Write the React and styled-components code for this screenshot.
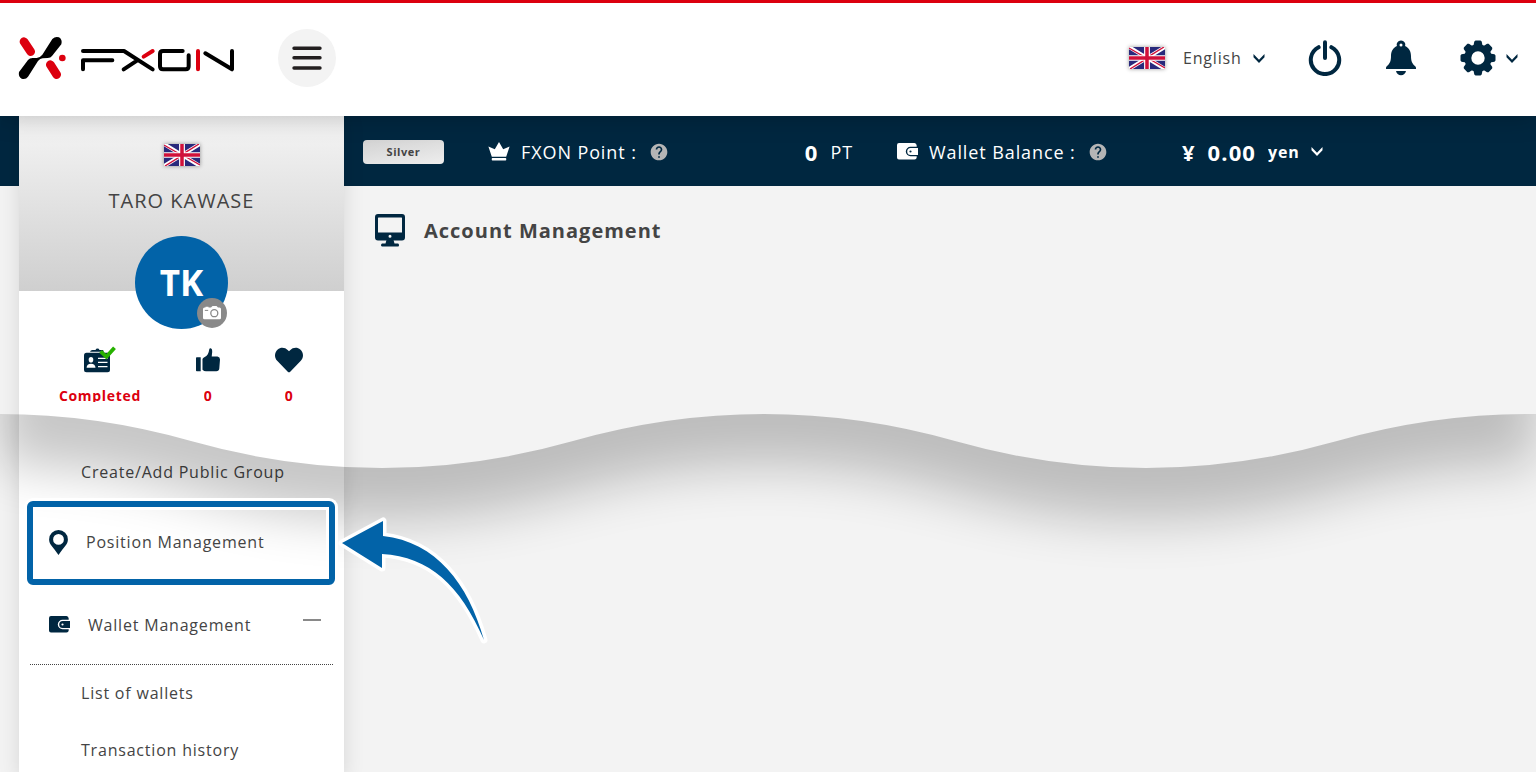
import React from 'react'
import styled, {createGlobalStyle} from 'styled-components';
import {FaHeart} from 'react-icons/fa';
import {MdHelp} from 'react-icons/md';

const subMenu = ["List of wallets", "Transaction history"];

const Logo = () => (
    <svg width="217" height="44" viewBox="54 108 651 132" fill="none" strokeLinecap="round" role="img" aria-label="FXON">
        <path d="M72 125L92 155M151 194L170 224" stroke="#dc000f" strokeWidth="26"/>
        <circle cx="187" cy="174" r="10" fill="#dc000f"/>
        <path
            d="M157 117Q166 108 177 112Q188 119 184 133L156 168Q152 174 143 174L128 175Q120 176 114 183L84 230Q77 240 65 236Q54 230 57 216L84 180Q89 174 98 174L110 174Q120 173 127 164Z"
            fill="#000"
        />
        <g stroke="#000" strokeWidth="12" strokeLinejoin="round">
            <path d="M249 153H372L458 208M249 208V181H337M371 208L412 181"/>
            <path d="M548 153H489Q480 153 480 162V199Q480 208 489 208H557Q566 208 566 199V166"/>
            <path d="M616 160L696 208V153"/>
        </g>
        <path d="M431 170L458 153M594 153V208" stroke="#dc000f" strokeWidth="12"/>
    </svg>
);

const UkFlag = () => (
    <FlagImage viewBox="0 0 37 23" preserveAspectRatio="none" role="img" aria-label="United Kingdom">
        <path d="M0 0H37V23H0Z" fill="#29297c"/>
        <path d="M0 0L37 23M37 0L0 23" stroke="#fff" strokeWidth="4"/>
        <path d="M0 1L17 11M37 22L20 12M1 23L17 13M36 0L20 10" stroke="#d0103a" strokeWidth="1.4"/>
        <path d="M18.5 0V23M0 11.5H37" stroke="#fff" strokeWidth="6"/>
        <path d="M18.5 0V23M0 11.5H37" stroke="#d0103a" strokeWidth="3.6"/>
    </FlagImage>
);

const Chevron = () => (
    <ChevronIcon width="12" height="9" viewBox="0 0 12 9" aria-hidden="true">
        <path d="M.5 0L6 5.7L11.500 0V3.200L6 9L.5 3.200Z"/>
    </ChevronIcon>
);

const MenuIcon = () => (
    <svg width="30" height="24" viewBox="0 0 30 24" fill="none" stroke="#231f20" strokeWidth="3.4" strokeLinecap="round">
        <path d="M2 2.2H28M2 11.7H28M2 22H28"/>
    </svg>
);

const PowerIcon = () => (
    <svg width="34" height="36" viewBox="0 0 34 36" fill="none" stroke="currentColor" strokeWidth="4" strokeLinecap="round">
        <path d="M17 2.300V18"/>
        <path d="M10.600 7.200A14.200 14.200 0 1 0 23.400 7.200"/>
    </svg>
);

const BellIcon = () => (
    <svg width="32" height="36" viewBox="0 0 32 36" fill="currentColor">
        <path
            fillRule="evenodd"
            d="M16 .5a4.200 4.200 0 0 1 4.100 5.600C24 7.800 26 11.500 26 16C26 21 27 23.500 30.200 26.200Q31 27 31 28V29H1V28Q1 27 1.800 26.200C5 23.500 6 21 6 16C6 11.500 8 7.800 11.900 6.100A4.200 4.200 0 0 1 16 .5ZM16 3.500a1.500 1.500 0 1 0 0 3a1.500 1.500 0 1 0 0-3Z"
        />
        <path d="M11 31H21C20.500 33.600 18.600 35.200 16 35.200S11.500 33.600 11 31Z"/>
    </svg>
);

const GearIcon = () => (
    <svg width="36" height="36" viewBox="-18 -18 36 36" fill="currentColor">
        {[0, 45, 90, 135].map(angle => (
            <path
                key={angle}
                transform={`rotate(${angle})`}
                d="M-2.500 -17.500H2.500L3.700 -16.500L4.600 -12H-4.600L-3.700 -16.500ZM-2.500 17.500H2.500L3.700 16.500L4.600 12H-4.600L-3.700 16.500Z"
            />
        ))}
        <circle r="10.200" fill="none" stroke="currentColor" strokeWidth="7"/>
    </svg>
);

const CrownIcon = () => (
    <svg width="22" height="19" viewBox="0 0 22 19" fill="currentColor">
        <path d="M11 0L15.200 7.200L21.600 4.500L18.200 14.800H3.800L.4 4.500L6.800 7.200Z"/>
        <path d="M4.500 16H17.500Q18.300 16 18.300 17.200T17.500 18.400H4.500Q3.700 18.400 3.700 17.200T4.500 16Z"/>
    </svg>
);

const WalletIcon = () => (
    <svg width="21" height="17" viewBox="0 0 21 17" fill="currentColor">
        <path d="M2 0H17.500Q19.500 0 19.700 2.500V3.800H13.500A4.500 4.500 0 0 0 13.500 13.200H19.700V14.500Q19.500 16.500 17.500 16.500H2Q0 16.500 0 14.500V2Q0 0 2 0Z"/>
        <path fillRule="evenodd" d="M13.700 5H21V12H13.700A3.500 3.500 0 0 1 13.700 5ZM13.500 7.400a1.100 1.100 0 1 0 0 2.200a1.100 1.100 0 1 0 0-2.200Z"/>
    </svg>
);

const MonitorIcon = () => (
    <svg width="32" height="33" viewBox="0 0 32 33" fill="#002740">
        <path
            fillRule="evenodd"
            d="M4 0H28Q31 0 31 3V23.500Q31 26.500 28 26.500H4Q1 26.500 1 23.500V3Q1 0 4 0ZM4.500 3.400Q4 3.400 4 4V18.600H28V4Q28 3.400 27.500 3.400ZM16 20.700a1.500 1.500 0 1 0 0 3a1.500 1.500 0 1 0 0-3Z"
        />
        <path d="M12.500 26H19.500L20.500 29.600H24Q25 30 25 31.200T24 32.500H8Q7 32.300 7 31.200T8 29.600H11.500Z"/>
    </svg>
);

const CameraIcon = () => (
    <svg width="18" height="14" viewBox="0 0 18 14" fill="#fff">
        <path d="M1.500 1.500H2.500V.8H5.500V1.500H8L9.500 0H13.500L15 1.500H16.500Q18 1.500 18 3V12Q18 13.200 16.500 13.200H1.500Q0 13.200 0 12V3Q0 1.500 1.500 1.500Z"/>
        <path d="M1.800 4.400H5.200" stroke="#898989" strokeWidth="1"/>
        <circle cx="11.300" cy="7.200" r="3.500" stroke="#898989" strokeWidth="1.300"/>
    </svg>
);

const IdCardIcon = () => (
    <svg width="33" height="28" viewBox="0 0 33 28">
        <path d="M6 5.700Q6.500 4 8.500 4H11.500Q12 2.600 13.500 2.600T15.500 4H19L20 5.700Z" fill="#002740"/>
        <rect y="6.800" width="26" height="19.500" rx="2.500" fill="#002740"/>
        <g fill="#fff">
            <ellipse cx="7" cy="13.800" rx="2.300" ry="2.800"/>
            <path d="M2.600 21.800Q2.800 17.700 7 17.700T11.500 21.800Z"/>
            <path d="M14 11.700H23.500V13H14ZM14 15.700H23.500V17H14ZM14 19.900H23.500V21.300H14Z"/>
        </g>
        <path d="M16.600 5.300L22.400 10.800L30.500 1.700" fill="none" stroke="#27b100" strokeWidth="3.800"/>
    </svg>
);

const ThumbIcon = () => (
    <svg width="24" height="24" viewBox="0 0 24 24" fill="#002740">
        <path d="M.8 9.300H4.700V23.300H.8Q0 23.300 0 22.500V10.100Q0 9.300 .8 9.300Z"/>
        <path d="M6.500 11Q7 9.900 8.300 9.300C11.500 7.800 12.800 5 13.200 1.500Q13.500 0 14.600 .2C16 .5 16.300 2.300 16.200 4L15.700 8.500H21.500Q24 8.800 24 11.500L23.300 20.500Q23 23.300 20.300 23.300H10Q8 23.300 6.500 21.800Z"/>
    </svg>
);

const PinIcon = () => (
    <svg width="19" height="25" viewBox="0 0 19 25" fill="#002740">
        <path fillRule="evenodd" d="M9.500 0A9.400 9.400 0 0 1 18.900 9.400C18.900 14.500 15 16.500 9.500 25C4 16.500 .1 14.500 .1 9.400A9.400 9.400 0 0 1 9.500 0ZM9.500 4a5.400 5.400 0 1 0 0 10.800a5.400 5.400 0 1 0 0-10.800Z"/>
    </svg>
);

const Wave = () => (
    <WaveShadow viewBox="0 0 1536 240" preserveAspectRatio="none" aria-hidden="true">
        <defs>
            <filter id="soften" x="-10%" y="-100%" width="120%" height="300%">
                <feGaussianBlur stdDeviation="26"/>
            </filter>
            <clipPath id="belowWave">
                <path d="M0 0Q96 0 191 27T382 54Q478 54 573 27T764 0Q860 0 955 27T1146 54Q1242 54 1337 27T1528 0H1536V240H0Z"/>
            </clipPath>
        </defs>
        <g clipPath="url(#belowWave)">
            <path
                d="M0 51Q96 51 191 78T382 105Q478 105 573 78T764 51Q860 51 955 78T1146 105Q1242 105 1337 78T1528 51H1536V-90H0Z"
                fill="#000"
                opacity="0.220"
                filter="url(#soften)"
            />
        </g>
    </WaveShadow>
);

const App = () => {

    return (
        <Page>
            <GlobalStyle/>
            <Header>
                <Brand href="#"><Logo/></Brand>
                <MenuToggle type="button" aria-label="Menu"><MenuIcon/></MenuToggle>
                <HeaderTools>
                    <Language>
                        <UkFlag/>
                        <Picker>
                            <Select aria-label="Language">
                                <option>English</option>
                            </Select>
                            <Chevron/>
                        </Picker>
                    </Language>
                    <IconButton type="button" aria-label="Log out"><PowerIcon/></IconButton>
                    <IconButton type="button" aria-label="Notifications"><BellIcon/></IconButton>
                    <IconButton type="button" aria-label="Settings"><GearIcon/><Chevron/></IconButton>
                </HeaderTools>
            </Header>
            <Body>
                <Sidebar>
                    <Profile>
                        <UkFlag/>
                        <UserName>TARO KAWASE</UserName>
                        <Avatar>
                            TK
                            <PhotoButton type="button" aria-label="Change photo"><CameraIcon/></PhotoButton>
                        </Avatar>
                    </Profile>
                    <Stats>
                        <Stat>
                            <IdCardIcon/>
                            <StatLabel>Completed</StatLabel>
                        </Stat>
                        <Stat>
                            <ThumbIcon/>
                            <StatLabel>0</StatLabel>
                        </Stat>
                        <Stat>
                            <FaHeart size={28}/>
                            <StatLabel>0</StatLabel>
                        </Stat>
                    </Stats>
                    <Menu>
                        <SubItem href="#">Create/Add Public Group</SubItem>
                        <ActiveItem>
                            <ItemLink href="#"><PinIcon/>Position Management</ItemLink>
                            <Arrow viewBox="0 0 150 130" aria-hidden="true">
                                <path d="M4 26L45 4V19C98 25 130 66 146 123C122 68 92 40 44 37V51Z" stroke="#fff" strokeWidth="7" strokeLinejoin="round"/>
                                <path d="M4 26L45 4V19C98 25 130 66 146 123C122 68 92 40 44 37V51Z" fill="#0263a8"/>
                            </Arrow>
                        </ActiveItem>
                        <ItemToggle type="button" aria-expanded="true">
                            <WalletIcon/>
                            <span>Wallet Management</span>
                            <Minus/>
                        </ItemToggle>
                        {
                            subMenu.map(item => (
                                <SubItem href="#" key={item}>{item}</SubItem>
                            ))
                        }
                    </Menu>
                </Sidebar>
                <Main>
                    <StatusBar>
                        <Rank>Silver</Rank>
                        <StatusGroup $width="365px">
                            <StatusLabel><CrownIcon/>FXON Point :<Help/></StatusLabel>
                            <StatusValue><b>0</b>PT</StatusValue>
                        </StatusGroup>
                        <StatusGroup $width="426px">
                            <StatusLabel><WalletIcon/>Wallet Balance :<Help/></StatusLabel>
                            <StatusValue>
                                <b>¥</b>
                                <b>0.00</b>
                                <Picker>
                                    <Select aria-label="Currency" $bold>
                                        <option>yen</option>
                                    </Select>
                                    <Chevron/>
                                </Picker>
                            </StatusValue>
                        </StatusGroup>
                    </StatusBar>
                    <PageTitle><MonitorIcon/>Account Management</PageTitle>
                </Main>
                <Wave/>
            </Body>
        </Page>
    )
}

const GlobalStyle = createGlobalStyle`
  * {
    box-sizing: border-box;
    letter-spacing: 0.05em;
  }

  body {
    margin: 0;
    color: #444;
    font-family: "Open Sans", "Noto Sans", sans-serif;
    font-size: 16px;
  }

  a {
    color: inherit;
    text-decoration: none;
  }

  button, select {
    padding: 0;
    border: 0;
    background: none;
    color: inherit;
    font: inherit;
    cursor: pointer;
  }

  svg {
    display: block;
    flex-shrink: 0;
  }
`;

const Page = styled.div`
  display: flex;
  flex-direction: column;
  height: 100vh;
  overflow-y: auto;
  scrollbar-width: none;
  background: #f3f3f3;
`;

const Header = styled.header`
  position: relative;
  z-index: 3;
  display: flex;
  flex-shrink: 0;
  align-items: center;
  height: 116px;
  padding: 0 18px 3px;
  border-top: 3px solid #dc000f;
  background: #fff;
  box-shadow: 0 0 24px rgba(0, 0, 0, 0.25);
`;

const Brand = styled.a`
  margin-right: 43px;
`;

const MenuToggle = styled.button`
  display: flex;
  align-items: center;
  justify-content: center;
  width: 58px;
  height: 58px;
  border-radius: 50%;
  background: #f3f3f3;
`;

const HeaderTools = styled.div`
  display: flex;
  align-items: center;
  gap: 43px;
  margin-left: auto;
  color: #002740;
`;

const Language = styled.div`
  display: flex;
  align-items: center;
  gap: 18px;
`;

const FlagImage = styled.svg`
  width: 36px;
  height: 22px;
  box-shadow: 0 0 4px rgba(0, 0, 0, 0.4);
`;

const ChevronIcon = styled.svg`
  fill: currentColor;
`;

const Picker = styled.div`
  display: flex;
  align-items: center;
  gap: 11px;
`;

const Select = styled.select`
  appearance: none;
  color: ${props => props.$bold ? "#fff" : "#444"};
  font-weight: ${props => props.$bold ? "bold" : "normal"};
`;

const IconButton = styled.button`
  display: flex;
  align-items: center;
  gap: 10px;
`;

const Body = styled.div`
  position: relative;
  display: flex;
  flex: 1 0 auto;
  padding-left: 19px;
  background: linear-gradient(#002740 70px, #f3f3f3 70px);
`;

const Sidebar = styled.aside`
  width: 325px;
  flex-shrink: 0;
  background: #fff;
  box-shadow: 0 0 20px rgba(0, 0, 0, 0.12);
`;

const Profile = styled.div`
  display: flex;
  flex-direction: column;
  align-items: center;
  gap: 20px;
  padding-top: 28px;
  background: linear-gradient(#f5f5f5, #cfcfcf);
`;

const UserName = styled.div`
  font-size: 20px;
  line-height: 30px;
`;

const Avatar = styled.div`
  position: relative;
  display: flex;
  align-items: center;
  justify-content: center;
  width: 93px;
  height: 93px;
  margin-bottom: -38px;
  border-radius: 50%;
  background: #0263a8;
  color: #fff;
  font-size: 35px;
  font-weight: bold;
  letter-spacing: 0;
`;

const PhotoButton = styled.button`
  position: absolute;
  right: 1px;
  bottom: 1px;
  display: flex;
  align-items: center;
  justify-content: center;
  width: 30px;
  height: 30px;
  border-radius: 50%;
  background: #898989;
`;

const Stats = styled.div`
  display: grid;
  grid-template-columns: 7fr 5fr 4fr;
  padding: 55px 19px 0 18px;
`;

const Stat = styled.div`
  display: grid;
  grid-template-rows: 28px 16px;
  row-gap: 12px;
  align-items: center;
  justify-items: center;
  color: #002740;
`;

const StatLabel = styled.div`
  height: 16px;
  overflow: hidden;
  color: #dc000f;
  font-size: 14px;
  font-weight: bold;
  line-height: 20px;
`;

const Menu = styled.nav`
  margin-top: 42px;
`;

const SubItem = styled.a`
  display: flex;
  align-items: center;
  height: 57px;
  padding: 0 0 1px 62px;
`;

const ActiveItem = styled.div`
  position: relative;
  z-index: 2;
  height: 84px;
  margin: 0 9px 0 8px;
  border: 6px solid #0263a8;
  border-radius: 6px;
  box-shadow: 0 0 0 3px #fff, inset 0 0 0 3px #fff;
`;

const ItemLink = styled.a`
  display: flex;
  align-items: center;
  gap: 18px;
  height: 100%;
  padding: 0 0 2px 16px;
`;

const Arrow = styled.svg`
  position: absolute;
  top: 10px;
  left: 305px;
  width: 150px;
  height: 130px;
  fill: none;
`;

const ItemToggle = styled.button`
  display: flex;
  align-items: center;
  gap: 18px;
  width: calc(100% - 22px);
  height: 80px;
  margin: 0 11px;
  padding: 0 12px 0 19px;
  border-bottom: 1px dotted #444;
  text-align: left;

  svg {
    color: #002740;
  }
`;

const Minus = styled.i`
  width: 18px;
  height: 2px;
  margin: 0 0 10px auto;
  background: #898989;
`;

const Main = styled.main`
  flex: 1;
  min-width: 0;
`;

const StatusBar = styled.div`
  display: flex;
  align-items: center;
  gap: 44px;
  height: 70px;
  padding: 1px 0 0 19px;
  color: #fff;
`;

const Rank = styled.div`
  width: 81px;
  border-radius: 4px;
  background: linear-gradient(170deg, #d2d2d2, #eee);
  color: #444;
  font-size: 11px;
  font-weight: bold;
  line-height: 24px;
  text-align: center;
`;

const StatusGroup = styled.div`
  display: flex;
  align-items: center;
  justify-content: space-between;
  width: ${props => props.$width};
`;

const StatusLabel = styled.div`
  display: flex;
  align-items: center;
  gap: 11px;
  font-size: 18px;
`;

const Help = styled(MdHelp).attrs({size: 20})`
  margin-left: 1px;
  color: #b5b5b5;
`;

const StatusValue = styled.div`
  display: flex;
  align-items: center;
  gap: 12px;
  font-size: 18px;

  b {
    font-size: 22px;
    line-height: 28px;
  }

  select {
    font-size: 16px;
  }
`;

const PageTitle = styled.h1`
  display: flex;
  align-items: center;
  gap: 18px;
  margin: 28px 30px;
  font-size: 20px;
  line-height: 33px;
`;

const WaveShadow = styled.svg`
  position: absolute;
  z-index: 1;
  top: 298px;
  left: 0;
  width: 100%;
  height: 240px;
  pointer-events: none;
`;


export default App;
